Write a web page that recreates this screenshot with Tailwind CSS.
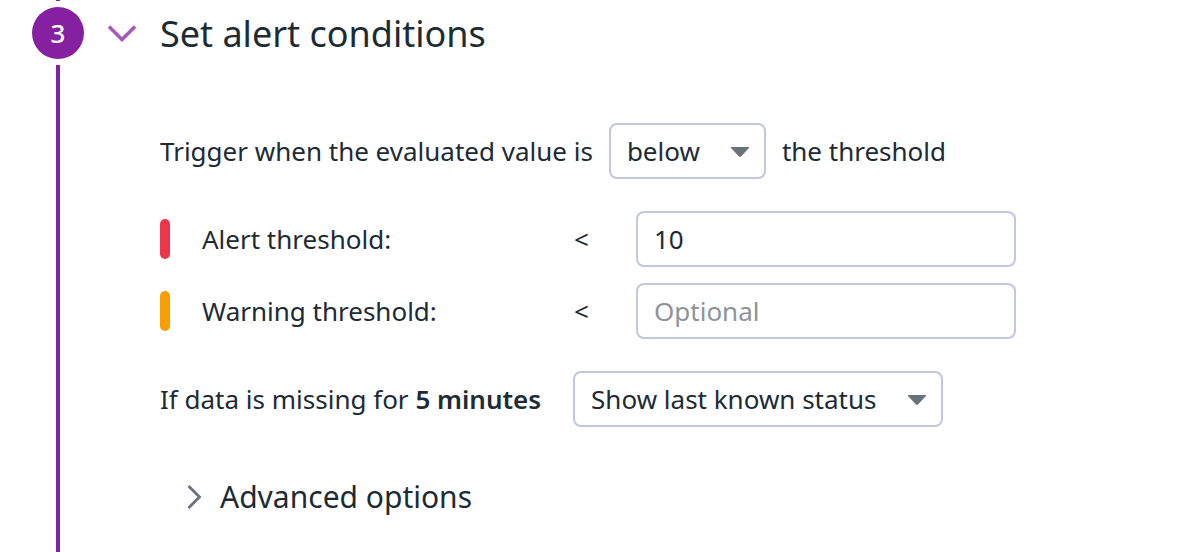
<!DOCTYPE html>
<html lang="en">
<head>
<meta charset="utf-8">
<meta name="viewport" content="width=device-width, initial-scale=1">
<title>Set alert conditions</title>
<script src="https://cdn.jsdelivr.net/npm/@tailwindcss/browser@4"></script>
</head>
<body class="bg-white font-['Noto_Sans',sans-serif] text-[26px] leading-9 text-[#1c2b34]">
<main class="flex min-h-screen pl-8">
  <div class="flex w-13 shrink-0 flex-col items-center">
    <span class="h-px w-1 bg-[#8520a1]"></span>
    <span class="my-1.5 flex size-13 shrink-0 items-center justify-center rounded-full bg-[#8520a1] font-medium text-white">3</span>
    <span class="w-1 grow bg-[#8520a1]"></span>
  </div>

  <section class="min-w-0 grow pl-6">
    <h2 class="flex h-17 items-center text-[36px]">
      <button type="button" class="flex items-center gap-6" aria-expanded="true">
        <svg class="h-5 w-7 shrink-0" viewBox="0 0 28 20" fill="none" stroke="#a756b9" stroke-width="3.4" aria-hidden="true"><path d="M1 2.500 14 15.500 27 2.500"/></svg>
        <span>Set alert conditions</span>
      </button>
    </h2>

    <form class="flex flex-col gap-8 pt-[55px] pl-13">
      <div class="flex items-center gap-4">
        <label for="comparison">Trigger when the evaluated value is</label>
        <div class="grid items-center">
          <select id="comparison" class="col-start-1 row-start-1 h-14 w-[157px] appearance-none rounded-lg border-2 border-[#c0c7e0] bg-white pr-10 pl-4">
            <option>below</option>
            <option>above</option>
          </select>
          <svg class="pointer-events-none col-start-1 row-start-1 mr-4 h-3 w-5 justify-self-end" viewBox="0 0 20 12" fill="#69737b" aria-hidden="true"><path d="M1 2h18v1l-8 8.500q-1 .8-2 0L1 3z"/></svg>
        </div>
        <span>the threshold</span>
      </div>

      <div class="flex flex-col gap-4">
        <div class="flex items-center">
          <span class="h-10 w-2.5 rounded-full bg-[#eb364b]"></span>
          <label for="alert" class="w-[404px] pl-8">Alert threshold:</label>
          <span class="w-[62px]">&lt;</span>
          <input id="alert" type="text" value="10" class="h-14 w-[380px] rounded-lg border-2 border-[#c0c7e0] bg-white px-4">
        </div>
        <div class="flex items-center">
          <span class="h-10 w-2.5 rounded-full bg-[#f99d02]"></span>
          <label for="warning" class="w-[404px] pl-8">Warning threshold:</label>
          <span class="w-[62px]">&lt;</span>
          <input id="warning" type="text" placeholder="Optional" class="h-14 w-[380px] rounded-lg border-2 border-[#c0c7e0] bg-white px-4 placeholder:text-[#8d9499]">
        </div>
      </div>

      <div class="flex items-center gap-8">
        <label for="missing">If data is missing for <strong class="font-semibold">5 minutes</strong></label>
        <div class="grid items-center">
          <select id="missing" class="col-start-1 row-start-1 h-14 w-[370px] appearance-none rounded-lg border-2 border-[#c0c7e0] bg-white pr-10 pl-4">
            <option>Show last known status</option>
          </select>
          <svg class="pointer-events-none col-start-1 row-start-1 mr-4 h-3 w-5 justify-self-end" viewBox="0 0 20 12" fill="#69737b" aria-hidden="true"><path d="M1 2h18v1l-8 8.500q-1 .8-2 0L1 3z"/></svg>
        </div>
      </div>

      <button type="button" class="mt-4 flex items-center gap-4 self-start pl-6 text-[30px] leading-11" aria-expanded="false">
        <svg class="h-6 w-5 shrink-0" viewBox="0 0 20 24" fill="none" stroke="#69737b" stroke-width="2.8" aria-hidden="true"><path d="M4.500 1 15.500 12 4.500 23"/></svg>
        <span>Advanced options</span>
      </button>
    </form>
  </section>
</main>
</body>
</html>
